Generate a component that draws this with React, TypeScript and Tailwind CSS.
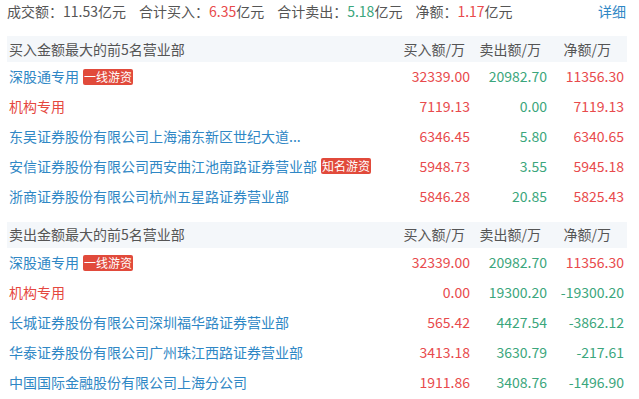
import React from 'react';

type Row = {
  name: string;
  tag?: string;
  inst?: boolean;
  buy: string;
  sell: string;
  net: string;
};

const buyRows: Row[] = [
  { name: '深股通专用', tag: '一线游资', buy: '32339.00', sell: '20982.70', net: '11356.30' },
  { name: '机构专用', inst: true, buy: '7119.13', sell: '0.00', net: '7119.13' },
  { name: '东吴证券股份有限公司上海浦东新区世纪大道...', buy: '6346.45', sell: '5.80', net: '6340.65' },
  { name: '安信证券股份有限公司西安曲江池南路证券营业部', tag: '知名游资', buy: '5948.73', sell: '3.55', net: '5945.18' },
  { name: '浙商证券股份有限公司杭州五星路证券营业部', buy: '5846.28', sell: '20.85', net: '5825.43' },
];

const sellRows: Row[] = [
  { name: '深股通专用', tag: '一线游资', buy: '32339.00', sell: '20982.70', net: '11356.30' },
  { name: '机构专用', inst: true, buy: '0.00', sell: '19300.20', net: '-19300.20' },
  { name: '长城证券股份有限公司深圳福华路证券营业部', buy: '565.42', sell: '4427.54', net: '-3862.12' },
  { name: '华泰证券股份有限公司广州珠江西路证券营业部', buy: '3413.18', sell: '3630.79', net: '-217.61' },
  { name: '中国国际金融股份有限公司上海分公司', buy: '1911.86', sell: '3408.76', net: '-1496.90' },
];

const RED = 'text-[#e84a4c]';
const GREEN = 'text-[#3ba67c]';

const Section = ({ title, rows }: { title: string; rows: Row[] }) => (
  <div>
    <div className="grid grid-cols-[1fr_77px_77px_77px] h-[26px] items-center bg-[#f4f7fa] pl-[2px] pr-[3px] text-[#555]">
      <span>{title}</span>
      <span className="text-right pr-[5px]">买入额/万</span>
      <span className="text-right pr-[6px]">卖出额/万</span>
      <span className="text-right pr-[13px]">净额/万</span>
    </div>
    {rows.map((r) => (
      <div key={r.name + r.buy} className="grid grid-cols-[1fr_77px_77px_77px] h-[29.8px] items-center pl-[2px] pr-[3px]">
        <div className="flex items-center gap-[4px] whitespace-nowrap">
          <span className={r.inst ? 'text-[#e5483f]' : 'text-[#2f87c5]'}>{r.name}</span>
          {r.tag && (
            <span className="bg-[#e14a3b] text-white text-[12px] leading-[16px] px-[1px] rounded-[2px]">{r.tag}</span>
          )}
        </div>
        <span className={`text-right ${RED}`}>{r.buy}</span>
        <span className={`text-right ${GREEN}`}>{r.sell}</span>
        <span className={`text-right ${r.net.startsWith('-') ? GREEN : RED}`}>{r.net}</span>
      </div>
    ))}
  </div>
);

export default function App() {
  return (
    <div
      className="w-[639px] h-[399px] bg-white text-[14px] overflow-hidden"
      style={{ fontFamily: '"Noto Sans CJK SC", "Noto Sans", sans-serif' }}
    >
      <div className="ml-[7px] w-[620px]">
        <div className="flex items-center h-[22px] text-[#555] whitespace-nowrap">
          <span className="mr-[13px]">成交额：11.53亿元</span>
          <span className="mr-[13px]">
            合计买入：<span className={RED}>6.35</span>亿元
          </span>
          <span className="mr-[13px]">
            合计卖出：<span className={GREEN}>5.18</span>亿元
          </span>
          <span>
            净额：<span className={RED}>1.17</span>亿元
          </span>
          <span className="ml-auto mr-[1px] text-[#2f87c5]">详细</span>
        </div>
        <div className="mt-[14px]">
          <Section title="买入金额最大的前5名营业部" rows={buyRows} />
        </div>
        <div className="mt-[11px]">
          <Section title="卖出金额最大的前5名营业部" rows={sellRows} />
        </div>
      </div>
    </div>
  );
}
